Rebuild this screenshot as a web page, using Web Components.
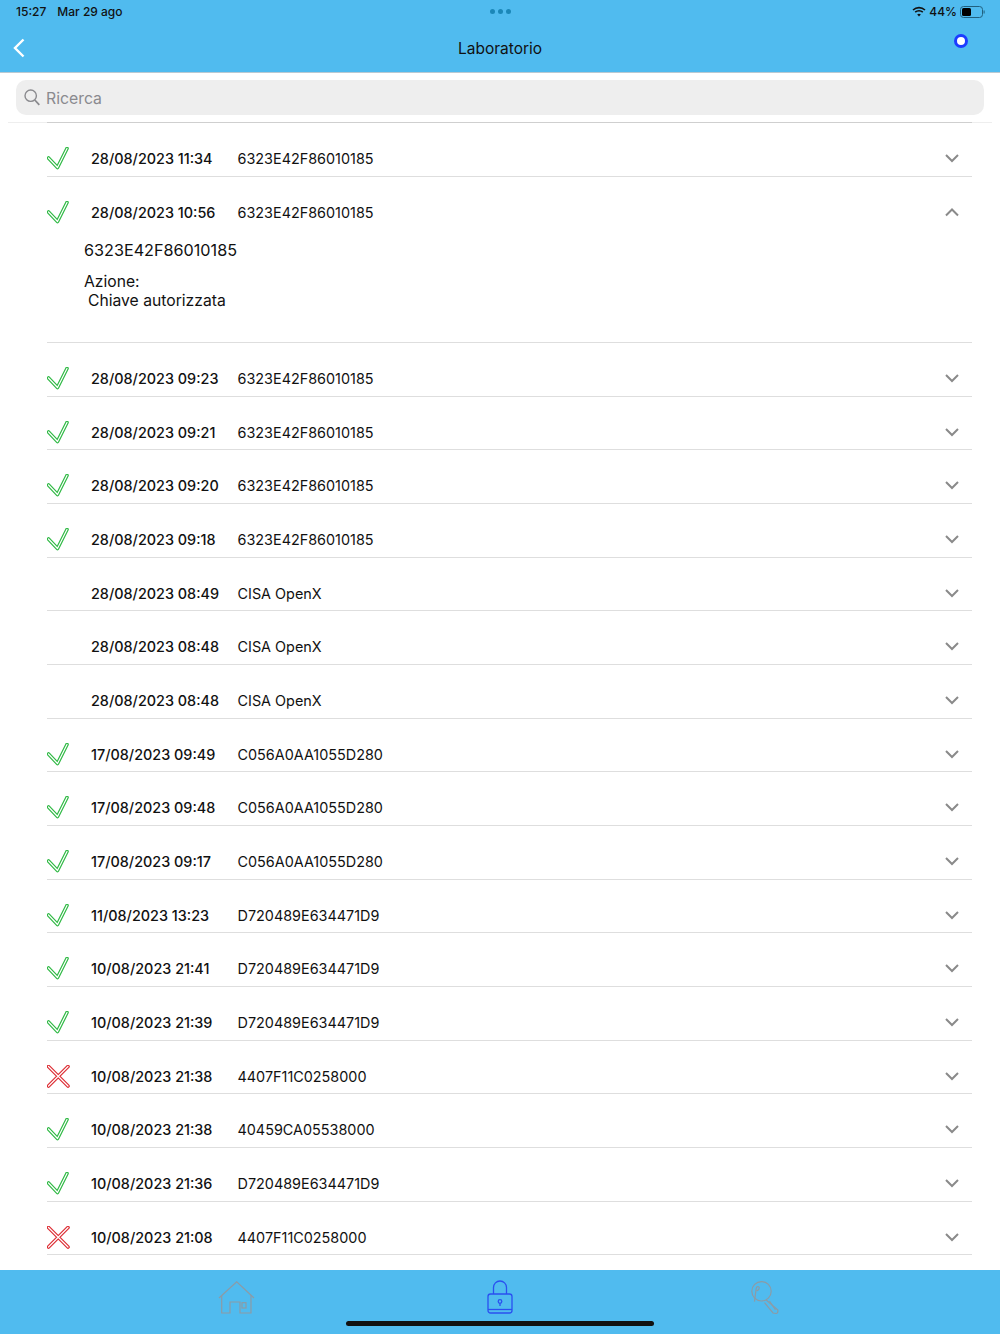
<!DOCTYPE html>
<html>
<head>
<meta charset="utf-8">
<style>
    html, body { margin: 0; padding: 0; background: #fff; }
    body { font-family: Inter, "Liberation Sans", sans-serif; color: #111; }
</style>
</head>
<body>
<app-shell>
    <nav-header slot="header" title="Laboratorio"></nav-header>
    <search-box slot="search" placeholder="Ricerca"></search-box>
    <log-list slot="list">
        <log-row status="ok" date="28/08/2023 11:34">6323E42F86010185</log-row>
        <log-row status="ok" date="28/08/2023 10:56" open>
            6323E42F86010185
            <log-detail slot="detail" code="6323E42F86010185" action="Chiave autorizzata"></log-detail>
        </log-row>
        <log-row status="ok" date="28/08/2023 09:23">6323E42F86010185</log-row>
        <log-row status="ok" date="28/08/2023 09:21">6323E42F86010185</log-row>
        <log-row status="ok" date="28/08/2023 09:20">6323E42F86010185</log-row>
        <log-row status="ok" date="28/08/2023 09:18">6323E42F86010185</log-row>
        <log-row date="28/08/2023 08:49">CISA OpenX</log-row>
        <log-row date="28/08/2023 08:48">CISA OpenX</log-row>
        <log-row date="28/08/2023 08:48">CISA OpenX</log-row>
        <log-row status="ok" date="17/08/2023 09:49">C056A0AA1055D280</log-row>
        <log-row status="ok" date="17/08/2023 09:48">C056A0AA1055D280</log-row>
        <log-row status="ok" date="17/08/2023 09:17">C056A0AA1055D280</log-row>
        <log-row status="ok" date="11/08/2023 13:23">D720489E634471D9</log-row>
        <log-row status="ok" date="10/08/2023 21:41">D720489E634471D9</log-row>
        <log-row status="ok" date="10/08/2023 21:39">D720489E634471D9</log-row>
        <log-row status="no" date="10/08/2023 21:38">4407F11C0258000</log-row>
        <log-row status="ok" date="10/08/2023 21:38">40459CA05538000</log-row>
        <log-row status="ok" date="10/08/2023 21:36">D720489E634471D9</log-row>
        <log-row status="no" date="10/08/2023 21:08">4407F11C0258000</log-row>
    </log-list>
    <tab-bar slot="tabs"></tab-bar>
</app-shell>

<script>
class AppShell extends HTMLElement {
    constructor(){
        super();
        this.attachShadow({mode:"open"}).innerHTML = `
        <style>
            :host {
                display: grid;
                grid-template-rows: 73px 49px 1fr 64px;
                width: 1000px;
                height: 1334px;
                overflow: hidden;
                background: #fff;
            }
            .list { min-height: 0; overflow: hidden; }
        </style>
        <slot name="header"></slot>
        <slot name="search"></slot>
        <div class="list"><slot name="list"></slot></div>
        <slot name="tabs"></slot>`;
    }
}

class NavHeader extends HTMLElement {
    connectedCallback(){
        this.attachShadow({mode:"open"}).innerHTML = `
        <style>
            :host {
                display: flex;
                flex-direction: column;
                background: #50bbef;
                box-shadow: inset 0 -1px 0 #b9c9d2;
                height: 73px;
            }
            .status {
                display: flex;
                align-items: center;
                justify-content: space-between;
                height: 24px;
                box-sizing: border-box;
                padding: 0 15px 1px 16px;
                font-size: 12px;
                font-weight: 500;
                color: #111;
            }
            .left, .right { display: flex; align-items: center; width: 200px; }
            .left { gap: 11px; }
            .right { justify-content: flex-end; gap: 3px; }
            .dots { display: flex; gap: 3px; }
            .dots i { width: 5px; height: 5px; border-radius: 50%; background: #1b87b8; }
            .bar {
                display: grid;
                grid-template-columns: 1fr auto 1fr;
                align-items: center;
                height: 48px;
                padding: 0 13px;
            }
            .title { font-size: 15.5px; color: #111; }
            .dot {
                justify-self: end;
                width: 8px;
                height: 8px;
                border: 3px solid #1c3cff;
                border-radius: 50%;
                background: #fff;
                margin: 0 19.5px 14px 0;
            }
            svg { display: block; }
        </style>
        <div class="status">
            <div class="left"><span>15:27</span><span>Mar 29 ago</span></div>
            <div class="dots"><i></i><i></i><i></i></div>
            <div class="right">
                <svg width="14" height="11" viewBox="0 0 14 11" fill="none" stroke="#111" stroke-width="1.6">
                    <path d="M1 4 C4.5 .8 9.5 .8 13 4"/>
                    <path d="M3.2 6.2 C5.3 4.3 8.7 4.3 10.8 6.2"/>
                    <path d="M7 10.6 L5.2 8.4 C6.2 7.6 7.8 7.6 8.8 8.4 Z" fill="#111" stroke="none"/>
                </svg>
                <span>44%</span>
                <svg width="25" height="12" viewBox="0 0 25 12">
                    <rect x=".5" y=".5" width="22" height="11" rx="3" fill="none" stroke="#20607f"/>
                    <rect x="2" y="2" width="9" height="8" rx="1.5" fill="#000"/>
                    <rect x="23.6" y="4.5" width="1" height="3" fill="#20607f"/>
                </svg>
            </div>
        </div>
        <div class="bar">
            <svg width="12" height="20" viewBox="0 0 12 20" fill="none" stroke="#fff" stroke-width="2.4">
                <path d="M10.5 1.5 L2 10 L10.5 18.5"/>
            </svg>
            <div class="title">${this.getAttribute("title")}</div>
            <div class="dot"></div>
        </div>`;
    }
}

class SearchBox extends HTMLElement {
    connectedCallback(){
        this.attachShadow({mode:"open"}).innerHTML = `
        <style>
            :host {
                display: block;
                padding: 7px 16px;
                background: #fff;
            }
            .field {
                display: flex;
                align-items: center;
                gap: 6px;
                height: 35px;
                padding-left: 8px;
                background: #eee;
                border-radius: 10px;
                color: #8a8a8e;
                font-size: 15.8px;
            }
            span { padding-top: 1px; }
            svg { display: block; }
        </style>
        <div class="field">
            <svg width="16" height="17" viewBox="0 0 16 17" fill="none" stroke="#8a8a8e" stroke-width="1.4">
                <circle cx="6.7" cy="6.7" r="5.7"/>
                <path d="M10.8 11 L15.3 15.8" stroke-width="1.8"/>
            </svg>
            <span>${this.getAttribute("placeholder")}</span>
        </div>`;
    }
}

class LogList extends HTMLElement {
    constructor(){
        super();
        this.attachShadow({mode:"open"}).innerHTML = `
        <style>
            :host {
                display: block;
                margin: 0 8px;
                border-top: 1px solid #eeeeee;
            }
            .inner {
                display: flex;
                flex-direction: column;
                margin: -1px 20px 0 39px;
                padding-top: .35px;
                border-top: 1px solid #cfcfcf;
            }
        </style>
        <div class="inner"><slot></slot></div>`;
    }
}

const ICONS = {
    ok: "M1.5 11 L10.5 20.5 L20 1.5",
    no: "M1.5 1.5 L21 21 M21 1.5 L1.5 21"
};
const COLORS = { ok: "#2fb944", no: "#dd2c33" };

class StatusIcon extends HTMLElement {
    connectedCallback(){
        const kind = this.getAttribute("kind");
        const d = ICONS[kind];
        this.attachShadow({mode:"open"}).innerHTML = `
        <style>
            :host { display: block; width: 23px; height: 23px; }
            svg { display: block; }
        </style>
        ${d ? `<svg width="23" height="23" viewBox="0 0 23 23" fill="none" stroke-linecap="round" stroke-linejoin="round">
            <path d="${d}" stroke="${COLORS[kind]}" stroke-width="3.6"/>
            <path d="${d}" stroke="#fff" stroke-width="1.2"/>
        </svg>` : ""}`;
    }
}

class LogRow extends HTMLElement {
    connectedCallback(){
        const open = this.hasAttribute("open");
        this.attachShadow({mode:"open"}).innerHTML = `
        <style>
            :host {
                display: block;
                border-bottom: 1px solid #dedede;
            }
            .head {
                display: grid;
                grid-template-columns: 44px 146.5px 1fr 14px;
                align-items: center;
                height: 52.68px;
                padding: 18px 13px 0 0;
                box-sizing: border-box;
                font-size: 14.4px;
                color: #111;
            }
            .date { font-weight: 500; }
            svg { display: block; }
        </style>
        <div class="head">
            <status-icon kind="${this.getAttribute("status") || ""}"></status-icon>
            <span class="date">${this.getAttribute("date")}</span>
            <span class="code"><slot></slot></span>
            <svg width="14" height="9" viewBox="0 0 14 9" fill="none" stroke="#8a8a8a" stroke-width="2">
                <path d="${open ? "M1 7.5 L7 1.500 L13 7.500" : "M1 1 L7 7 L13 1"}"/>
            </svg>
        </div>
        <slot name="detail"></slot>`;
    }
}

class LogDetail extends HTMLElement {
    connectedCallback(){
        this.attachShadow({mode:"open"}).innerHTML = `
        <style>
            :host {
                display: block;
                height: 112.32px;
                padding: 10px 0 0 37px;
                box-sizing: border-box;
                color: #111;
                font-size: 15.7px;
            }
            .code { font-size: 16.2px; line-height: 20px; }
            .label { margin-top: 12px; line-height: 19.5px; }
            .value { padding-left: 4px; line-height: 19.5px; }
        </style>
        <div class="code">${this.getAttribute("code")}</div>
        <div class="label">Azione:</div>
        <div class="value">${this.getAttribute("action")}</div>`;
    }
}

class TabBar extends HTMLElement {
    constructor(){
        super();
        this.attachShadow({mode:"open"}).innerHTML = `
        <style>
            :host {
                display: grid;
                grid-template-columns: 1fr 1fr 1fr;
                position: relative;
                height: 64px;
                background: #50bbef;
                box-sizing: border-box;
                padding: 10px 103px 0 104px;
            }
            .tab { display: flex; justify-content: center; align-items: flex-start; }
            svg { display: block; }
            .home {
                position: absolute;
                left: 346px;
                top: 51px;
                width: 308px;
                height: 5px;
                border-radius: 3px;
                background: #111;
            }
        </style>
        <div class="tab">
            <svg width="37" height="35" viewBox="0 0 37 35" fill="none" stroke="#8c9ba6" stroke-width="1.2">
                <path d="M1 18 L18.700 1.700 L36 18"/>
                <path d="M3.700 15.500 V33 H12 V22 H22 V33 H33 V15.500"/>
                <rect x="24" y="22.700" width="4" height="5.300"/>
            </svg>
        </div>
        <div class="tab">
            <svg width="26" height="34" viewBox="0 0 26 34" fill="none" stroke="#2a50f0" stroke-width="1.300">
                <path d="M6.500 14 V7.500 A6.500 6.500 0 0 1 19.500 7.500 V14"/>
                <rect x="1" y="14" width="24" height="19" rx="2.500"/>
                <path d="M1 29.500 H25"/>
                <circle cx="13" cy="21.500" r="1.800"/>
                <path d="M13 23.500 V26"/>
            </svg>
        </div>
        <div class="tab">
            <svg width="30" height="35" viewBox="0 0 30 35" fill="none" stroke="#8c9ba6" stroke-width="1.200">
                <circle cx="11.500" cy="11.300" r="9.700"/>
                <path d="M16.200 20 L27.900 30 C28 32 27.500 33.500 26.200 33.500 L23 33 L14.500 22.700"/>
                <path d="M19.500 21 L25.500 30"/>
                <path d="M4.500 21.700 L6.200 8.300 C6.500 6 9.500 6 9.200 8 C9 10 7.500 10.700 6.800 10.500"/>
            </svg>
        </div>
        <div class="home"></div>`;
    }
}

customElements.define("app-shell", AppShell);
customElements.define("nav-header", NavHeader);
customElements.define("search-box", SearchBox);
customElements.define("log-list", LogList);
customElements.define("status-icon", StatusIcon);
customElements.define("log-row", LogRow);
customElements.define("log-detail", LogDetail);
customElements.define("tab-bar", TabBar);
</script>
</body>
</html>
